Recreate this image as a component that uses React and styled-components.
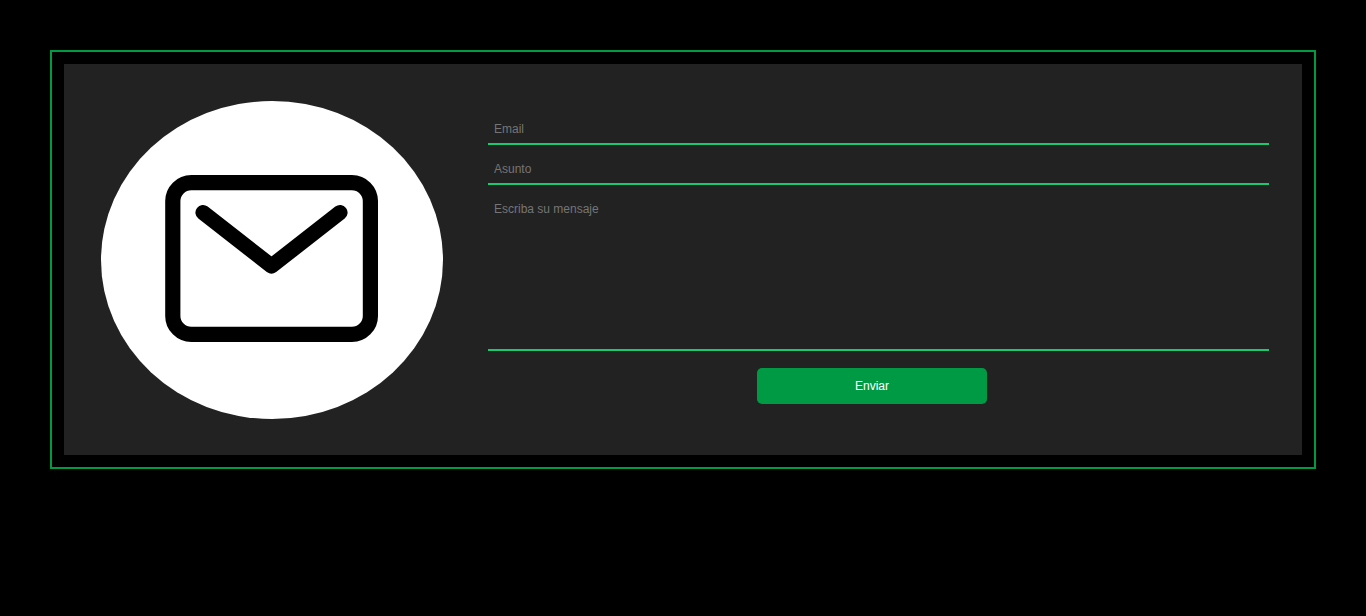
import React from "react";
import styled, { createGlobalStyle, css } from "styled-components";

const GlobalStyle = createGlobalStyle`
  * { box-sizing: border-box; }
  body {
    margin: 0;
    background: #000;
    font-family: Arial, "Liberation Sans", sans-serif;
    font-size: 12px;
  }
`;

const Frame = styled.main`
  margin: 50px;
  padding: 12px;
  border: 2px solid #009944;
`;

const Panel = styled.section`
  display: grid;
  grid-template-columns: 342fr 794fr;
  column-gap: 32px;
  padding: 37px 33px 36px 37px;
  background: #222;
`;

const MailBadge = styled.svg`
  display: block;
  width: 100%;
  height: auto;
`;

const Form = styled.form`
  display: flex;
  flex-direction: column;
  padding-top: 12px;
`;

const fieldStyle = css`
  display: block;
  margin: 0 0 8px 13px;
  padding: 9px 6px 7px;
  border: 0;
  border-bottom: 2px solid #16c972;
  border-radius: 0;
  outline: none;
  background: transparent;
  color: #fff;
  font: inherit;
  line-height: 14px;

  &::placeholder {
    color: #757575;
    opacity: 1;
  }
`;

const TextField = styled.input`
  ${fieldStyle}
  height: 32px;
`;

const MessageField = styled.textarea`
  ${fieldStyle}
  height: 158px;
  resize: none;
`;

const SubmitButton = styled.button`
  align-self: center;
  width: 230px;
  max-width: 100%;
  height: 36px;
  margin-top: 9px;
  padding: 0;
  border: 0;
  border-radius: 5px;
  background: #009944;
  color: #fff;
  font: inherit;
  cursor: pointer;
`;

export default function App() {
  return (
    <>
      <GlobalStyle />
      <Frame>
        <Panel>
          <MailBadge viewBox="0 0 342 318" aria-hidden="true">
            <ellipse cx="171" cy="159" rx="171" ry="159" fill="#fff" />
            <g fill="none" stroke="#000" strokeWidth="15.2">
              <rect x="71.8" y="81.6" width="197.6" height="151.8" rx="18.5" />
              <path
                d="M102 111.6 170.5 165 239 111.6"
                strokeLinecap="round"
                strokeLinejoin="round"
              />
            </g>
          </MailBadge>
          <Form onSubmit={(event) => event.preventDefault()}>
            <TextField type="email" name="email" placeholder="Email" aria-label="Email" />
            <TextField type="text" name="asunto" placeholder="Asunto" aria-label="Asunto" />
            <MessageField
              name="mensaje"
              placeholder="Escriba su mensaje"
              aria-label="Escriba su mensaje"
            />
            <SubmitButton type="submit">Enviar</SubmitButton>
          </Form>
        </Panel>
      </Frame>
    </>
  );
}
